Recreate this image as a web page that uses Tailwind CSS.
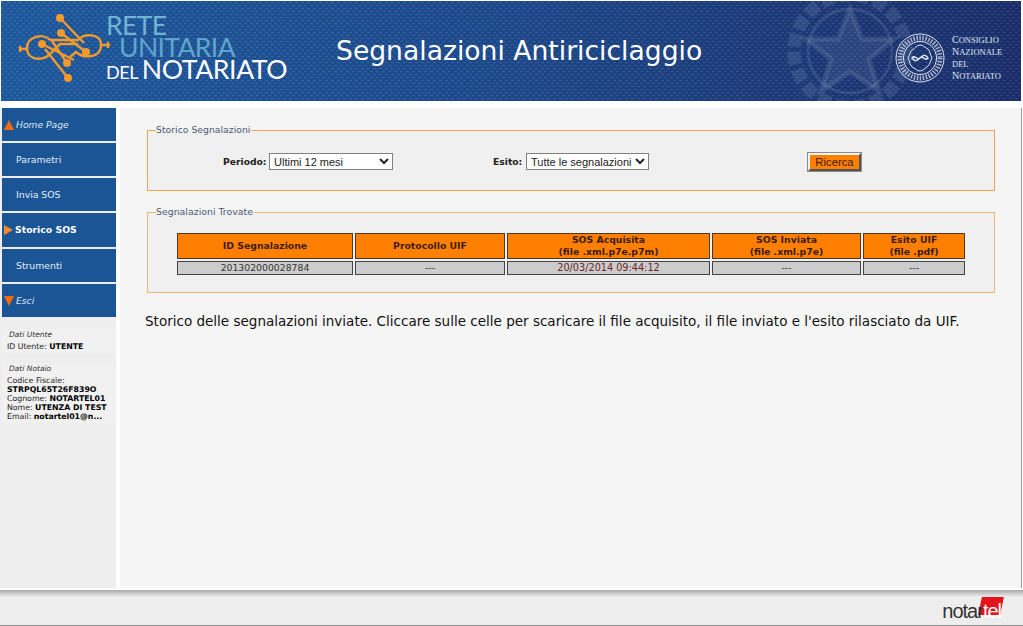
<!DOCTYPE html>
<html lang="it">
  <head>
    <meta charset="UTF-8" />
    <title>Segnalazioni Antiriciclaggio</title>
    <script src="https://cdn.jsdelivr.net/npm/@tailwindcss/browser@4"></script>
  </head>
  <body class="bg-white font-['DejaVu_Sans',sans-serif] h-[626px] w-[1023px] overflow-hidden flex flex-col">
    <!-- Header -->
    <div class="relative mt-px ml-px w-[1020px] h-[100px] shrink-0 overflow-hidden bg-gradient-to-r from-[#1f5a9f] via-[#1e4a8c] to-[#1c2f6c] flex items-center">
      <svg class="absolute inset-0" width="1020" height="100">
        <defs>
          <pattern id="weave" width="6" height="6" patternUnits="userSpaceOnUse">
            <path d="M0 1.5h3M3 4.5h3" stroke="#ffffff" stroke-opacity="0.09" stroke-width="1.2" />
            <path d="M1.5 3v3M4.500 0v3" stroke="#000000" stroke-opacity="0.08" stroke-width="1.2" />
          </pattern>
        </defs>
        <rect width="1020" height="100" fill="url(#weave)" />
        <!-- stemma in filigrana -->
        <g fill="none" stroke="#9fb2d0" stroke-opacity="0.16">
          <circle cx="849" cy="50" r="56" stroke-width="13" stroke-dasharray="13 5" />
          <circle cx="849" cy="50" r="42" stroke-width="3" />
          <path d="M849 8 L861 38 L893 38 L868 58 L878 90 L849 71 L820 90 L830 58 L805 38 L837 38 Z" fill="#9fb2d0" fill-opacity="0.12" stroke-width="5" />
        </g>
      </svg>
      <!-- Logo rete -->
      <svg class="relative ml-[17px] shrink-0" width="94" height="74" viewBox="18 14 94 74" fill="none" stroke="#f39a2d" stroke-width="2.400">
        <path d="M19 49 H27 M20 46 V52 M110 45 H101 M108 42 V48" />
        <path d="M50 40 C44 33 27 36 27 48 C27 61 44 62 52 52 L60 44 H78" />
        <path d="M50 40 H78 C84 33 101 33 101 45 C101 58 84 59 76 52 L70 57" />
        <path d="M60 18 L84 43 M61 33 L86 52 M42 44 L74 60 M45 49 L68 78 M52 41 L67 63" />
        <g fill="#f39a2d" stroke="none">
          <circle cx="60" cy="18" r="4" />
          <circle cx="61" cy="33" r="4" />
          <circle cx="42" cy="44" r="4" />
          <circle cx="86" cy="52" r="4" />
          <circle cx="67" cy="63" r="4" />
          <circle cx="68" cy="78" r="4" />
        </g>
      </svg>
      <div class="relative -ml-[6px] -mt-1 w-[230px] shrink-0 font-['Lato',sans-serif] leading-[22px]">
        <div class="text-[26.600px] text-[#6fb4d3] tracking-tight">RETE</div>
        <div class="text-[26.600px] text-[#5fa6cc] pl-[13px] tracking-tight">UNITARIA</div>
        <div class="text-white tracking-tight"><span class="text-[18px]">DEL</span> <span class="text-[26.600px]">NOTARIATO</span></div>
      </div>
      <h1 class="relative text-[26.600px] text-white font-normal whitespace-nowrap">Segnalazioni Antiriciclaggio</h1>
      <!-- Consiglio Nazionale -->
      <div class="absolute left-[894px] top-[32px] flex items-center gap-[7px]">
        <svg width="50" height="50" viewBox="0 0 50 50" fill="none" stroke="#dfe6f1">
          <circle cx="25" cy="25" r="24" />
          <circle cx="25" cy="25" r="16.500" />
          <circle cx="25" cy="25" r="20" stroke-width="5" stroke-dasharray="1.500 1.500" stroke-opacity="0.7" />
          <path d="M25 12c4 0 5 3 8 4 2 2 2 5 4 9-2 4-2 6-4 8-3 2-5 5-8 5s-5-3-8-4c-2-2-2-5-4-9 2-4 2-6 4-8 3-1 4-5 8-5Z" />
          <path d="M17 25c3-4 5 3 8 0s5-4 8 0c-3 4-5-3-8 0s-5 4-8 0Z" stroke-width="1.500" />
        </svg>
        <div class="font-['Liberation_Serif',serif] text-[#dfe6f1] text-[10px] leading-[11px]">
          <div>C<span class="text-[8.500px]">ONSIGLIO</span></div>
          <div>N<span class="text-[8.500px]">AZIONALE</span></div>
          <div><span class="text-[8.500px]">DEL</span></div>
          <div>N<span class="text-[8.500px]">OTARIATO</span></div>
        </div>
      </div>
    </div>

    <div class="flex flex-1 min-h-0 w-[1022px] pt-[7px] -mb-px">
      <!-- Sidebar -->
      <div class="w-[116px] shrink-0 bg-[#eeeeee] pl-[2px] text-[9.300px]">
        <div class="flex flex-col gap-[2px] w-[114px]">
          <a class="h-[33px] bg-[#1c5596] text-[#dbe8f5] italic text-[9.200px] flex items-center pl-[14px] relative">
            <span class="absolute left-[2px] top-[12px] w-0 h-0 border-x-[5px] border-x-transparent border-b-[10px] border-b-[#f26c0d]"></span>
            Home Page
          </a>
          <a class="h-[33px] bg-[#1c5596] text-[#e4edf7] flex items-center pl-[14px]">Parametri</a>
          <a class="h-[33px] bg-[#1c5596] text-[#e4edf7] flex items-center pl-[14px]">Invia SOS</a>
          <a class="h-[34px] bg-[#1c5596] text-white font-bold flex items-center pl-[13px] relative">
            <span class="absolute left-[2px] top-[12px] w-0 h-0 border-y-[5px] border-y-transparent border-l-[9px] border-l-[#f5892a]"></span>
            Storico SOS
          </a>
          <a class="h-[33px] bg-[#1c5596] text-[#e4edf7] flex items-center pl-[14px]">Strumenti</a>
          <a class="h-[33px] bg-[#1c5596] text-[#dbe8f5] italic text-[9.200px] flex items-center pl-[14px] relative">
            <span class="absolute left-[2px] top-[12px] w-0 h-0 border-x-[5px] border-x-transparent border-t-[10px] border-t-[#f26c0d]"></span>
            Esci
          </a>
        </div>
        <!-- Dati utente -->
        <div class="mt-[12px] w-[112px] pl-[5px] pr-px bg-[#f1f1f1] text-[7.800px] leading-[9px] text-[#222] h-[24px] pt-[1px]">
          <div class="italic pl-[2px] text-[7.500px] text-[#333] mb-[3px]">Dati Utente</div>
          <div>ID Utente: <b class="text-black">UTENTE</b></div>
        </div>
        <div class="mt-[10px] w-[112px] pl-[5px] bg-[#f1f1f1] text-[7.800px] leading-[9px] text-[#222] h-[60px] pt-[1px]">
          <div class="italic pl-[2px] text-[7.500px] text-[#333] mb-[3px]">Dati Notaio</div>
          <div>Codice Fiscale:</div>
          <div><b class="text-black">STRPQL65T26F839O</b></div>
          <div>Cognome: <b class="text-black">NOTARTEL01</b></div>
          <div>Nome: <b class="text-black">UTENZA DI TEST</b></div>
          <div>Email: <b class="text-black">notartel01@n...</b></div>
        </div>
      </div>

      <!-- Contenuto -->
      <div class="ml-[4px] flex-1 bg-[#f5f5f5] border-r border-[#9a9a9a] pl-[27px] pr-[26px] pt-[16px]">
        <fieldset class="border border-[#f5a24f] bg-[#f0f0f0] h-[67px] px-[8px]">
          <legend class="text-[9.300px] text-[#4d5b78] leading-[12px] px-0 pr-[1px]">Storico Segnalazioni</legend>
          <div class="flex items-center text-[9.200px] font-bold text-[#222] h-[51px]">
            <label class="ml-[67px] w-[43px] whitespace-nowrap">Periodo:</label>
            <select class="ml-[3px] w-[124px] h-[17px] bg-white border border-[#808080] font-['Liberation_Sans',sans-serif] font-normal text-[11px] text-[#222]">
              <option>Ultimi 12 mesi</option>
            </select>
            <label class="ml-[100px] w-[29px] whitespace-nowrap">Esito:</label>
            <select class="ml-[4px] w-[123px] h-[17px] bg-white border border-[#808080] font-['Liberation_Sans',sans-serif] font-normal text-[11px] text-[#222]">
              <option>Tutte le segnalazioni</option>
            </select>
            <button class="ml-[159px] w-[53px] h-[18px] bg-[#ff8000] border-2 border-t-[#f3f3f3] border-l-[#f3f3f3] border-r-[#555] border-b-[#555] shadow-[0_0_0_1px_#8a8a8a] font-['Liberation_Sans',sans-serif] font-normal text-[11.300px] leading-[12px] text-[#3a1a00]">Ricerca</button>
          </div>
        </fieldset>

        <fieldset class="border border-[#f0b574] bg-[#f0f0f0] h-[87px] px-[8px] mt-[15px]">
          <legend class="text-[9.400px] text-[#4d5b78] leading-[12px] pr-[1px]">Segnalazioni Trovate</legend>
          <table class="ml-[19px] mt-[13px] w-[792px] border-separate border-spacing-[2px] text-[9.300px] text-center table-fixed">
            <thead>
              <tr class="h-[26px] leading-[12px] text-[#3d1c00]">
                <th class="w-[176px] bg-[#ff8000] border border-[#4a3a2a]">ID Segnalazione</th>
                <th class="w-[150px] bg-[#ff8000] border border-[#4a3a2a]">Protocollo UIF</th>
                <th class="w-[203px] bg-[#ff8000] border border-[#4a3a2a]">SOS Acquisita<br />(file .xml.p7e.p7m)</th>
                <th class="w-[149px] bg-[#ff8000] border border-[#4a3a2a]">SOS Inviata<br />(file .xml.p7e)</th>
                <th class="bg-[#ff8000] border border-[#4a3a2a]">Esito UIF<br />(file .pdf)</th>
              </tr>
            </thead>
            <tbody>
              <tr class="h-[14px] leading-[12px] text-[#333]">
                <td class="bg-[#cccccc] border border-[#444]">201302000028784</td>
                <td class="bg-[#cccccc] border border-[#444]">---</td>
                <td class="bg-[#cccccc] border border-[#444] text-[#6e2525] text-[9.700px]">20/03/2014 09:44:12</td>
                <td class="bg-[#cccccc] border border-[#444]">---</td>
                <td class="bg-[#cccccc] border border-[#444]">---</td>
              </tr>
            </tbody>
          </table>
        </fieldset>

        <p class="mt-[19px] -ml-[2px] text-[13.530px] leading-[18px] text-[#111] whitespace-nowrap">Storico delle segnalazioni inviate. Cliccare sulle celle per scaricare il file acquisito, il file inviato e l'esito rilasciato da UIF.</p>
      </div>
    </div>

    <!-- Footer -->
    <div class="h-[36px] shrink-0 mt-[3px] w-[1023px] bg-gradient-to-b from-[#a9a9a9] via-[#eeeeee] via-[20%] to-[#eeeeee] border-b border-[#8c8c8c] flex justify-end items-center pr-[22px]">
      <div class="relative flex items-center font-['Liberation_Sans',sans-serif] text-[20px] leading-[20px] tracking-[-1px] text-[#333] mt-[6px]">
        <span class="absolute left-[38px] -top-[4px] w-[22px] h-[18px] bg-[#e3141c] -skew-x-12"></span>
        <span class="relative">notar</span><span class="relative text-white">tel</span>
      </div>
    </div>
  </body>
</html>
